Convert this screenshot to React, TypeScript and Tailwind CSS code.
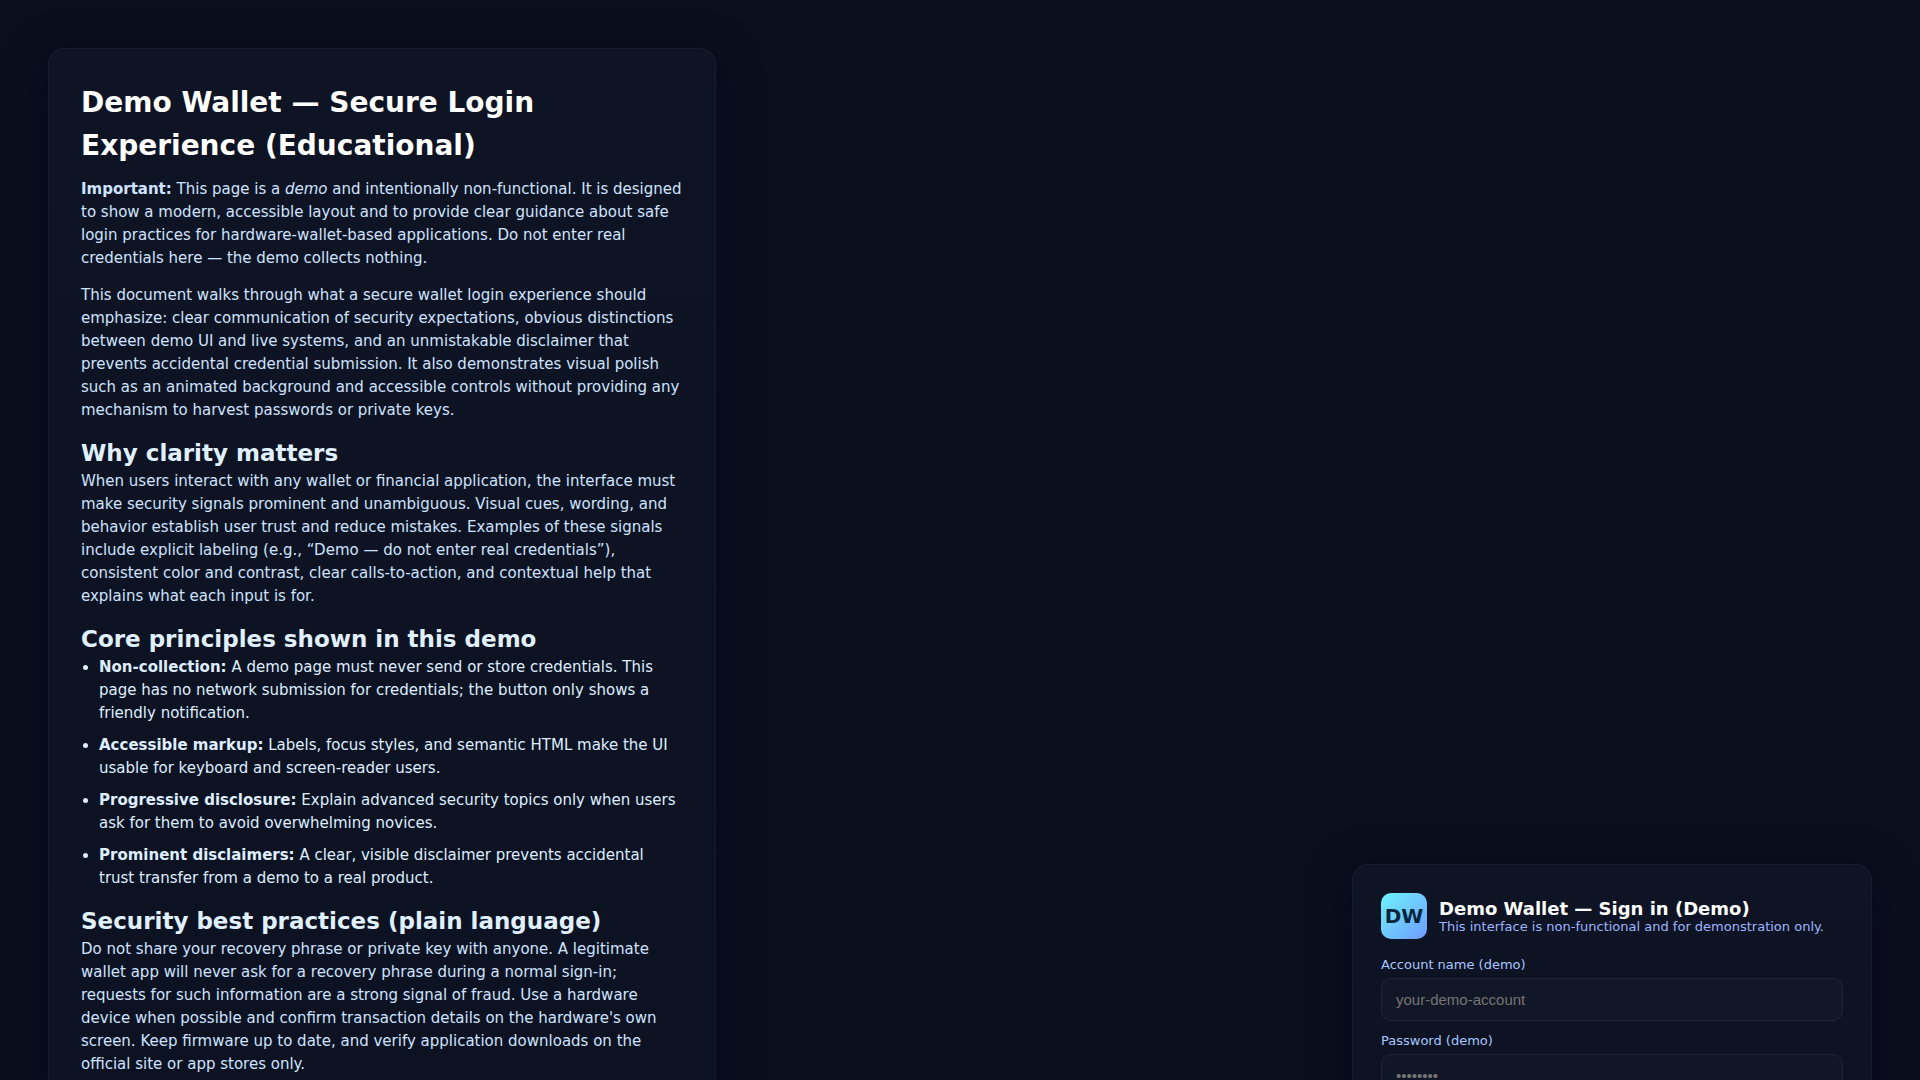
const principles = [
  {
    title: "Non-collection:",
    text: "A demo page must never send or store credentials. This page has no network submission for credentials; the button only shows a friendly notification.",
  },
  {
    title: "Accessible markup:",
    text: "Labels, focus styles, and semantic HTML make the UI usable for keyboard and screen-reader users.",
  },
  {
    title: "Progressive disclosure:",
    text: "Explain advanced security topics only when users ask for them to avoid overwhelming novices.",
  },
  {
    title: "Prominent disclaimers:",
    text: "A clear, visible disclaimer prevents accidental trust transfer from a demo to a real product.",
  },
];

const fields = [
  {
    id: "account",
    label: "Account name (demo)",
    type: "text",
    placeholder: "your-demo-account",
  },
  {
    id: "password",
    label: "Password (demo)",
    type: "password",
    placeholder: "••••••••",
  },
];

const cardClass =
  "w-full rounded-2xl border border-white/[0.04] bg-gradient-to-b from-[#0f1424] to-[#0c1222] shadow-[0_10px_40px_rgba(6,4,22,0.6)]";

function Article() {
  return (
    <article
      className={`${cardClass} max-w-[668px] p-8 text-[15px] leading-[23px] text-[#cfe3ff]`}
    >
      <h1 className="mb-[11px] text-[28px] leading-[43px] font-bold text-white">
        Demo Wallet — Secure Login Experience (Educational)
      </h1>
      <p className="mb-[14px]">
        <strong>Important:</strong> This page is a <em>demo</em> and
        intentionally non-functional. It is designed to show a modern,
        accessible layout and to provide clear guidance about safe login
        practices for hardware-wallet-based applications. Do not enter real
        credentials here — the demo collects nothing.
      </p>
      <p className="mb-[14px]">
        This document walks through what a secure wallet login experience should
        emphasize: clear communication of security expectations, obvious
        distinctions between demo UI and live systems, and an unmistakable
        disclaimer that prevents accidental credential submission. It also
        demonstrates visual polish such as an animated background and accessible
        controls without providing any mechanism to harvest passwords or private
        keys.
      </p>

      <h2 className="text-[23px] leading-[34px] font-bold text-[#e0f0ff]">
        Why clarity matters
      </h2>
      <p className="mb-[14px]">
        When users interact with any wallet or financial application, the
        interface must make security signals prominent and unambiguous. Visual
        cues, wording, and behavior establish user trust and reduce mistakes.
        Examples of these signals include explicit labeling (e.g., “Demo — do
        not enter real credentials”), consistent color and contrast, clear
        calls-to-action, and contextual help that explains what each input is
        for.
      </p>

      <h2 className="text-[23px] leading-[34px] font-bold text-[#e0f0ff]">
        Core principles shown in this demo
      </h2>
      <ul className="mb-[14px] list-disc space-y-[9px] pl-[18px] text-[#dfeeff]">
        {principles.map((item) => (
          <li key={item.title}>
            <strong>{item.title}</strong> {item.text}
          </li>
        ))}
      </ul>

      <h2 className="text-[23px] leading-[34px] font-bold text-[#e0f0ff]">
        Security best practices (plain language)
      </h2>
      <p>
        Do not share your recovery phrase or private key with anyone. A
        legitimate wallet app will never ask for a recovery phrase during a
        normal sign-in; requests for such information are a strong signal of
        fraud. Use a hardware device when possible and confirm transaction
        details on the hardware's own screen. Keep firmware up to date, and
        verify application downloads on the official site or app stores only.
      </p>
    </article>
  );
}

function LoginCard() {
  return (
    <aside className={`${cardClass} mt-[816px] max-w-[520px] p-7`}>
      <div className="mb-[18px] flex items-center gap-3">
        <div className="flex size-[46px] shrink-0 items-center justify-center rounded-[10px] bg-gradient-to-br from-[#6ef3ff] to-[#6f9bff] text-[20px] font-bold text-[#04263a]">
          DW
        </div>
        <div>
          <h2 className="text-lg leading-[21px] font-bold text-white">
            Demo Wallet — Sign in (Demo)
          </h2>
          <p className="text-[13px] leading-[15px] text-[#9fb4ff]">
            This interface is non-functional and for demonstration only.
          </p>
        </div>
      </div>
      <form className="flex flex-col gap-3">
        {fields.map((field) => (
          <div key={field.id} className="flex flex-col gap-[6px]">
            <label
              htmlFor={field.id}
              className="text-[13px] leading-[15px] text-[#a9c6ff]"
            >
              {field.label}
            </label>
            <input
              id={field.id}
              type={field.type}
              placeholder={field.placeholder}
              className="h-[43px] w-full rounded-[10px] border border-white/[0.06] bg-white/[0.02] px-[14px] font-['Liberation_Sans',sans-serif] text-[15px] text-[#e6f0ff] placeholder:text-[#757575]"
            />
          </div>
        ))}
      </form>
    </aside>
  );
}

export default function App() {
  return (
    <main className="flex min-h-screen items-start justify-between gap-12 bg-[#0a0f1e] p-12 font-['DejaVu_Sans',sans-serif]">
      <Article />
      <LoginCard />
    </main>
  );
}
